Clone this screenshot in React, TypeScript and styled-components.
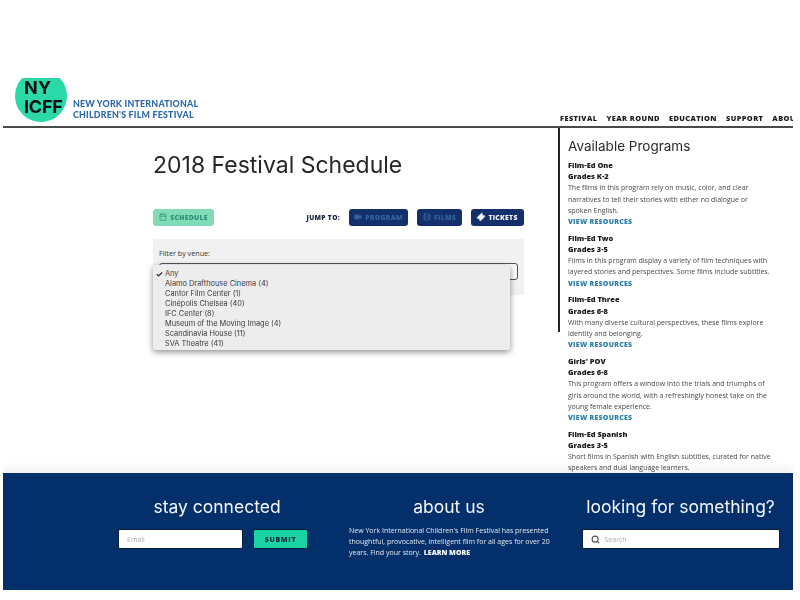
import React from "react";
import styled, { createGlobalStyle } from "styled-components";
import { Calendar, Check, Film, Search, Ticket, Video } from "lucide-react";

const GlobalStyle = createGlobalStyle`
    html, body {
        margin: 0;
        padding: 0;
        background: #fff;
        overflow: hidden;
    }
    * {
        box-sizing: border-box;
    }
`;

const Page = styled.div`
    display: flex;
    flex-direction: column;
    width: 790px;
    height: 590px;
    margin-left: 3px;
    overflow: hidden;
    font-family: "Open Sans", "Liberation Sans", sans-serif;
    color: #222;
    filter: blur(0.35px);
`;

const Header = styled.header`
    display: flex;
    flex: none;
    align-items: flex-end;
    height: 128px;
    padding: 0 0 0 12px;
    border-bottom: 2px solid #4a4a4a;
    overflow: hidden;
`;

const LogoMark = styled.svg`
    flex: none;
    width: 52px;
    height: 44px;
    margin-bottom: 4px;
`;

const LogoName = styled.div`
    flex: none;
    width: 136px;
    margin: 0 0 6px 6px;
    font-family: "Lato", sans-serif;
    font-size: 8.9px;
    font-weight: 900;
    line-height: 11px;
    letter-spacing: 0.2px;
    color: #2c69a9;
    white-space: nowrap;
`;

const Nav = styled.nav`
    display: flex;
    flex: none;
    gap: 9px;
    margin: 0 0 3px 351px;
`;

const NavItem = styled.a`
    font-size: 7.4px;
    font-weight: 800;
    line-height: 10px;
    letter-spacing: 0.42px;
    color: #1c1c1c;
    white-space: nowrap;
`;

const Main = styled.main`
    display: flex;
    flex: 1;
    min-height: 0;
    overflow: hidden;
`;

const Content = styled.section`
    flex: none;
    width: 555px;
    padding: 22px 0 0 150px;
`;

const Title = styled.h1`
    width: 371px;
    margin: 0 0 28px;
    font-family: "Inter", sans-serif;
    font-size: 23px;
    font-weight: 400;
    line-height: 30px;
    color: #262626;
    white-space: nowrap;
`;

const Toolbar = styled.div`
    display: flex;
    align-items: center;
    width: 371px;
    height: 18px;
    margin-bottom: 13px;
`;

const JumpLabel = styled.span`
    margin-left: auto;
    font-size: 6.7px;
    font-weight: 800;
    letter-spacing: 0.3px;
    color: #1b2440;
`;

const ActionButton = styled.a<{ $tone: "mint" | "muted" | "solid"; $width: number }>`
    display: flex;
    align-items: center;
    justify-content: center;
    gap: 3px;
    width: ${(p) => p.$width}px;
    height: 17px;
    margin-left: ${(p) => (p.$tone === "mint" ? 0 : 9)}px;
    border-radius: 3px;
    font-size: 6.8px;
    font-weight: 800;
    letter-spacing: 0.3px;
    background: ${(p) => (p.$tone === "mint" ? "#80dcb6" : "#14306c")};
    color: ${(p) => (p.$tone === "mint" ? "#2f8f78" : p.$tone === "muted" ? "#33629c" : "#f2f4f8")};
    svg {
        flex: none;
        width: 8px;
        height: 8px;
    }
`;

const TicketIcon = styled(Ticket)`
    transform: rotate(-45deg);
`;

const FilterPanel = styled.div`
    position: relative;
    width: 371px;
    height: 56px;
    padding: 9px 6px 0;
    background: #f1f1f1;
`;

const FilterLabel = styled.div`
    margin-bottom: 5px;
    font-size: 7.2px;
    font-weight: 500;
    line-height: 10px;
    color: #333;
`;

const SelectBox = styled.div`
    height: 17px;
    border: 1px solid #555;
    border-radius: 3px;
    background: #fafafa;
`;

const Dropdown = styled.ul`
    position: absolute;
    top: 26px;
    left: 0;
    width: 357px;
    height: 85px;
    margin: 0;
    padding: 4px 0 0 12px;
    list-style: none;
    border-radius: 3px;
    background: #ededed;
    box-shadow: 0 2px 6px rgba(0, 0, 0, 0.45);
`;

const DropdownItem = styled.li`
    position: relative;
    height: 10px;
    font-family: "Inter", sans-serif;
    font-size: 7.4px;
    line-height: 10px;
    color: #3c3c3c;
    svg {
        position: absolute;
        top: 2px;
        left: -9px;
        width: 7px;
        height: 7px;
        stroke-width: 4;
        color: #222;
    }
`;

const Sidebar = styled.aside`
    position: relative;
    flex: 1;
    min-width: 0;
    padding: 9px 0 0 10px;
    &::before {
        content: "";
        position: absolute;
        top: 0;
        left: 0;
        width: 2px;
        height: 204px;
        background: #222;
    }
`;

const SidebarTitle = styled.h2`
    margin: 0 0 4px;
    font-family: "Inter", sans-serif;
    font-size: 13.5px;
    font-weight: 400;
    line-height: 19px;
    color: #2a2a2a;
    white-space: nowrap;
`;

const Program = styled.div`
    margin-bottom: 5.6px;
    font-size: 7px;
    line-height: 11.2px;
`;

const ProgramName = styled.div`
    font-size: 7.45px;
    font-weight: 800;
    color: #1a1a1a;
`;

const ProgramText = styled.p`
    margin: 0;
    color: #484848;
    white-space: nowrap;
`;

const ResourceLink = styled.a`
    display: block;
    font-weight: 800;
    letter-spacing: 0.25px;
    color: #2a7fab;
`;

const Footer = styled.footer`
    display: grid;
    flex: none;
    grid-template-columns: 232px 232px 1fr;
    height: 117px;
    padding: 24px 0 0 98px;
    background: #03306b;
    color: #fff;
    box-shadow: 0 -6px 8px rgba(0, 0, 0, 0.05);
`;

const FooterColumn = styled.div`
    display: flex;
    flex-direction: column;
    align-items: center;
    &:last-child {
        padding-left: 3px;
    }
`;

const FooterTitle = styled.h3<{ $gap: number }>`
    margin: 0 0 ${(p) => p.$gap}px;
    font-family: "Inter", sans-serif;
    font-size: 17.5px;
    font-weight: 400;
    line-height: 20px;
    color: #f4f6f8;
    white-space: nowrap;
`;

const FormRow = styled.div`
    display: flex;
    gap: 10px;
    margin-right: 8px;
`;

const FieldBox = styled.div<{ $width: number }>`
    display: flex;
    align-items: center;
    gap: 5px;
    width: ${(p) => p.$width}px;
    height: 20px;
    padding: 0 8px;
    border: 1px solid #0a1c3a;
    border-radius: 2px;
    background: #fff;
    font-size: 7px;
    color: #aaa;
    svg {
        width: 9px;
        height: 9px;
        stroke-width: 3;
        color: #555;
    }
`;

const SubmitButton = styled.a`
    display: flex;
    align-items: center;
    justify-content: center;
    width: 55px;
    height: 20px;
    border: 1px solid #0a1c3a;
    border-radius: 2px;
    background: #19d3a5;
    font-size: 7px;
    font-weight: 800;
    letter-spacing: 0.7px;
    color: #0d2a3a;
`;

const AboutText = styled.p`
    width: 200px;
    margin: 0;
    font-size: 7px;
    line-height: 11px;
    color: #e4e8ef;
    white-space: nowrap;
`;

const LearnMore = styled.a`
    margin-left: 1px;
    font-weight: 800;
    color: #fff;
`;

const navItems = ["FESTIVAL", "YEAR ROUND", "EDUCATION", "SUPPORT", "ABOUT"];

const venues = [
    "Any",
    "Alamo Drafthouse Cinema (4)",
    "Cantor Film Center (1)",
    "Cinépolis Chelsea (40)",
    "IFC Center (8)",
    "Museum of the Moving Image (4)",
    "Scandinavia House (11)",
    "SVA Theatre (41)",
];

const programs = [
    {
        name: "Film-Ed One",
        grades: "Grades K-2",
        lines: [
            "The films in this program rely on music, color, and clear",
            "narratives to tell their stories with either no dialogue or",
            "spoken English.",
        ],
        link: true,
    },
    {
        name: "Film-Ed Two",
        grades: "Grades 3-5",
        lines: [
            "Films in this program display a variety of film techniques with",
            "layered stories and perspectives. Some films include subtitles.",
        ],
        link: true,
    },
    {
        name: "Film-Ed Three",
        grades: "Grades 6-8",
        lines: [
            "With many diverse cultural perspectives, these films explore",
            "identity and belonging.",
        ],
        link: true,
    },
    {
        name: "Girls' POV",
        grades: "Grades 6-8",
        lines: [
            "This program offers a window into the trials and triumphs of",
            "girls around the world, with a refreshingly honest take on the",
            "young female experience.",
        ],
        link: true,
    },
    {
        name: "Film-Ed Spanish",
        grades: "Grades 3-5",
        lines: [
            "Short films in Spanish with English subtitles, curated for native",
            "speakers and dual language learners.",
        ],
        link: false,
    },
];

export default function App() {
    return (
        <Page>
            <GlobalStyle />
            <Header>
                <LogoMark viewBox="0 0 52 44">
                    <circle cx="26" cy="18" r="26" fill="#2bd9a8" />
                    <text x="9" y="16" fontFamily="Inter, sans-serif" fontSize="18" fontWeight="700" fill="#111" letterSpacing="0.4">NY</text>
                    <text x="9" y="35" fontFamily="Inter, sans-serif" fontSize="18" fontWeight="700" fill="#111" letterSpacing="-0.2">ICFF</text>
                </LogoMark>
                <LogoName>
                    NEW YORK INTERNATIONAL
                    <br />
                    CHILDREN'S FILM FESTIVAL
                </LogoName>
                <Nav>
                    {navItems.map((item) => (
                        <NavItem key={item}>{item}</NavItem>
                    ))}
                </Nav>
            </Header>
            <Main>
                <Content>
                    <Title>2018 Festival Schedule</Title>
                    <Toolbar>
                        <ActionButton $tone="mint" $width={61}>
                            <Calendar />
                            SCHEDULE
                        </ActionButton>
                        <JumpLabel>JUMP TO:</JumpLabel>
                        <ActionButton $tone="muted" $width={59}>
                            <Video fill="currentColor" />
                            PROGRAM
                        </ActionButton>
                        <ActionButton $tone="muted" $width={45}>
                            <Film />
                            FILMS
                        </ActionButton>
                        <ActionButton $tone="solid" $width={53}>
                            <TicketIcon fill="currentColor" />
                            TICKETS
                        </ActionButton>
                    </Toolbar>
                    <FilterPanel>
                        <FilterLabel>Filter by venue:</FilterLabel>
                        <SelectBox />
                        <Dropdown>
                            {venues.map((venue, i) => (
                                <DropdownItem key={venue}>
                                    {i === 0 && <Check />}
                                    {venue}
                                </DropdownItem>
                            ))}
                        </Dropdown>
                    </FilterPanel>
                </Content>
                <Sidebar>
                    <SidebarTitle>Available Programs</SidebarTitle>
                    {programs.map((program) => (
                        <Program key={program.name}>
                            <ProgramName>{program.name}</ProgramName>
                            <ProgramName>{program.grades}</ProgramName>
                            {program.lines.map((line) => (
                                <ProgramText key={line}>{line}</ProgramText>
                            ))}
                            {program.link && <ResourceLink>VIEW RESOURCES</ResourceLink>}
                        </Program>
                    ))}
                </Sidebar>
            </Main>
            <Footer>
                <FooterColumn>
                    <FooterTitle $gap={12}>stay connected</FooterTitle>
                    <FormRow>
                        <FieldBox $width={125}>Email</FieldBox>
                        <SubmitButton>SUBMIT</SubmitButton>
                    </FormRow>
                </FooterColumn>
                <FooterColumn>
                    <FooterTitle $gap={8}>about us</FooterTitle>
                    <AboutText>
                        New York International Children's Film Festival has presented
                        <br />
                        thoughtful, provocative, intelligent film for all ages for over 20
                        <br />
                        years. Find your story. <LearnMore>LEARN MORE</LearnMore>
                    </AboutText>
                </FooterColumn>
                <FooterColumn>
                    <FooterTitle $gap={12}>looking for something?</FooterTitle>
                    <FieldBox $width={198}>
                        <Search />
                        Search
                    </FieldBox>
                </FooterColumn>
            </Footer>
        </Page>
    );
}
